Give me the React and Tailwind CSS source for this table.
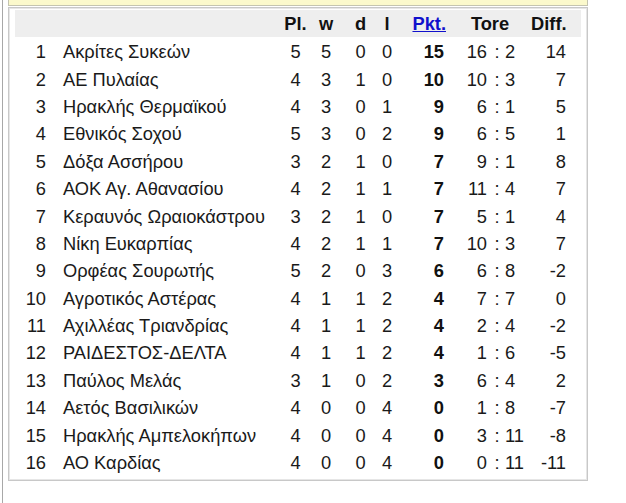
const ROWS = [
  [1, 'Ακρίτες Συκεών', 5, 5, 0, 0, 15, 16, 2, 14],
  [2, 'ΑΕ Πυλαίας', 4, 3, 1, 0, 10, 10, 3, 7],
  [3, 'Ηρακλής Θερμαϊκού', 4, 3, 0, 1, 9, 6, 1, 5],
  [4, 'Εθνικός Σοχού', 5, 3, 0, 2, 9, 6, 5, 1],
  [5, 'Δόξα Ασσήρου', 3, 2, 1, 0, 7, 9, 1, 8],
  [6, 'ΑΟΚ Αγ. Αθανασίου', 4, 2, 1, 1, 7, 11, 4, 7],
  [7, 'Κεραυνός Ωραιοκάστρου', 3, 2, 1, 0, 7, 5, 1, 4],
  [8, 'Νίκη Ευκαρπίας', 4, 2, 1, 1, 7, 10, 3, 7],
  [9, 'Ορφέας Σουρωτής', 5, 2, 0, 3, 6, 6, 8, -2],
  [10, 'Αγροτικός Αστέρας', 4, 1, 1, 2, 4, 7, 7, 0],
  [11, 'Αχιλλέας Τριανδρίας', 4, 1, 1, 2, 4, 2, 4, -2],
  [12, 'ΡΑΙΔΕΣΤΟΣ-ΔΕΛΤΑ', 4, 1, 1, 2, 4, 1, 6, -5],
  [13, 'Παύλος Μελάς', 3, 1, 0, 2, 3, 6, 4, 2],
  [14, 'Αετός Βασιλικών', 4, 0, 0, 4, 0, 1, 8, -7],
  [15, 'Ηρακλής Αμπελοκήπων', 4, 0, 0, 4, 0, 3, 11, -8],
  [16, 'ΑΟ Καρδίας', 4, 0, 0, 4, 0, 0, 11, -11],
]

export default function App() {
  return (
    <div className="min-h-[503px] bg-white font-['Liberation_Sans',Arial,sans-serif] text-[18.3px] text-[#1a1a1a]">
      <div className="ml-[2px] min-h-[503px] border-l border-[#a8a8a8] pl-[5px]">
        {/* yellow box, cut off at the top */}
        <div className="h-[6px] w-[580px] border-x border-b border-[#c4c4b0] bg-[#fbf9cc]" />

        {/* standings */}
        <div className="mt-[1px] w-[580px] border border-[#c8c8c8] pl-[6px] pr-[4px] pb-[3px] shadow-[inset_0_0_0_1px_#e6e6e6]">
          <table className="w-[566px] table-fixed border-separate border-spacing-x-0 border-spacing-y-[2px] leading-[21px]">
            <colgroup>
              <col className="w-[38px]" />
              <col className="w-[228px]" />
              <col className="w-[29px]" />
              <col className="w-[32px]" />
              <col className="w-[37px]" />
              <col className="w-[16px]" />
              <col className="w-[54px]" />
              <col className="w-[41px]" />
              <col className="w-[14px]" />
              <col className="w-[27px]" />
              <col className="w-[50px]" />
            </colgroup>
            <thead>
              <tr className="h-[27px] bg-[#eeeeee] font-bold text-[#111]">
                <th />
                <th />
                <th className="text-center">Pl.</th>
                <th className="text-center">w</th>
                <th className="text-center">d</th>
                <th className="text-center">l</th>
                <th className="pr-[3px] text-right">
                  <a href="#" className="text-[#1010cc] underline">Pkt.</a>
                </th>
                <th colSpan={3} className="text-center">Tore</th>
                <th className="pr-[15px] text-right">Diff.</th>
              </tr>
            </thead>
            <tbody>
              {ROWS.map(([rank, name, pl, w, d, l, pts, gf, ga, diff]) => (
                <tr key={rank} className="h-[25.4px]">
                  <td className="pr-[7px] text-right">{rank}</td>
                  <td className="truncate pl-[10px]">{name}</td>
                  <td className="text-center">{pl}</td>
                  <td className="text-center">{w}</td>
                  <td className="text-center">{d}</td>
                  <td className="text-center">{l}</td>
                  <td className="pr-[5px] text-right font-bold text-[#111]">{pts}</td>
                  <td className="pr-[3px] text-right">{gf}</td>
                  <td className="text-center">:</td>
                  <td className="pl-[1px] text-left">{ga}</td>
                  <td className="pr-[15px] text-right">{diff}</td>
                </tr>
              ))}
            </tbody>
          </table>
        </div>
      </div>
    </div>
  )
}
